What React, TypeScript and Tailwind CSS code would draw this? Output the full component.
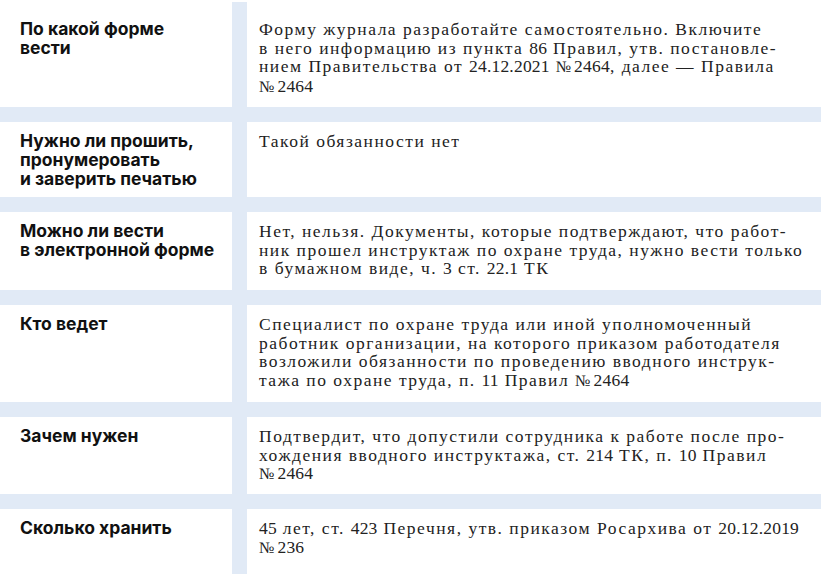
import React from "react";

type Row = { label: string[]; text: string[]; h: string; first?: boolean };

const rows: Row[] = [
  {
    label: ["По какой форме", "вести"],
    text: [
      "Форму журнала разработайте самостоятельно. Включите",
      "в него информацию из пункта 86 Правил, утв. постановле-",
      "нием Правительства от 24.12.2021 № 2464, далее — Правила",
      "№ 2464",
    ],
    h: "h-[107px]",
    first: true,
  },
  {
    label: ["Нужно ли прошить,", "пронумеровать", "и заверить печатью"],
    text: ["Такой обязанности нет"],
    h: "h-[75px]",
  },
  {
    label: ["Можно ли вести", "в электронной форме"],
    text: [
      "Нет, нельзя. Документы, которые подтверждают, что работ-",
      "ник прошел инструктаж по охране труда, нужно вести только",
      "в бумажном виде, ч. 3 ст. 22.1 ТК",
    ],
    h: "h-[78px]",
  },
  {
    label: ["Кто ведет"],
    text: [
      "Специалист по охране труда или иной уполномоченный",
      "работник организации, на которого приказом работодателя",
      "возложили обязанности по проведению вводного инструк-",
      "тажа по охране труда, п. 11 Правил № 2464",
    ],
    h: "h-[97px]",
  },
  {
    label: ["Зачем нужен"],
    text: [
      "Подтвердит, что допустили сотрудника к работе после про-",
      "хождения вводного инструктажа, ст. 214 ТК, п. 10 Правил",
      "№ 2464",
    ],
    h: "h-[77px]",
  },
  {
    label: ["Сколько хранить"],
    text: [
      "45 лет, ст. 423 Перечня, утв. приказом Росархива от 20.12.2019",
      "№ 236",
    ],
    h: "h-[65px]",
  },
];

function Line({ text }: { text: string }) {
  const parts = text.split(/([\d.]*\d[\d.]*|№\s)/);
  return (
    <div className="whitespace-nowrap">
      {parts.map((p, k) => {
        if (!p) return null;
        if (p.startsWith("№")) {
          return (
            <span key={k} className="tracking-[0px] text-[16px]">
              {"№\u2009"}
            </span>
          );
        }
        if (/\d/.test(p)) {
          return (
            <span key={k} className="tracking-[0.2px]">
              {p}
            </span>
          );
        }
        return <React.Fragment key={k}>{p}</React.Fragment>;
      })}
    </div>
  );
}

export default function App() {
  return (
    <div className="w-[821px] h-[583px] bg-white overflow-hidden">
      {rows.map((r, i) => (
        <React.Fragment key={i}>
          {i > 0 && <div className="h-[15px] w-full bg-[#e1eaf6]" />}
          <div className={`flex ${r.h}`}>
            <div
              className={`w-[232px] pl-5 ${r.first ? "pt-[19px]" : "pt-[9px]"} font-['Inter',sans-serif] font-bold text-[17.5px] leading-[19px] text-[#111]`}
            >
              {r.label.map((l, j) => (
                <div key={j} className="whitespace-nowrap">
                  {l}
                </div>
              ))}
            </div>
            <div className={`w-[15px] bg-[#e1eaf6] ${r.first ? "mt-[2px]" : ""}`} />
            <div
              className={`flex-1 pl-3 ${r.first ? "pt-[20px]" : "pt-[10px]"} font-['Liberation_Serif',serif] text-[17.5px] leading-[18.5px] tracking-[1.5px] text-[#222]`}
            >
              {r.text.map((l, j) => (
                <Line key={j} text={l} />
              ))}
            </div>
          </div>
        </React.Fragment>
      ))}
    </div>
  );
}
